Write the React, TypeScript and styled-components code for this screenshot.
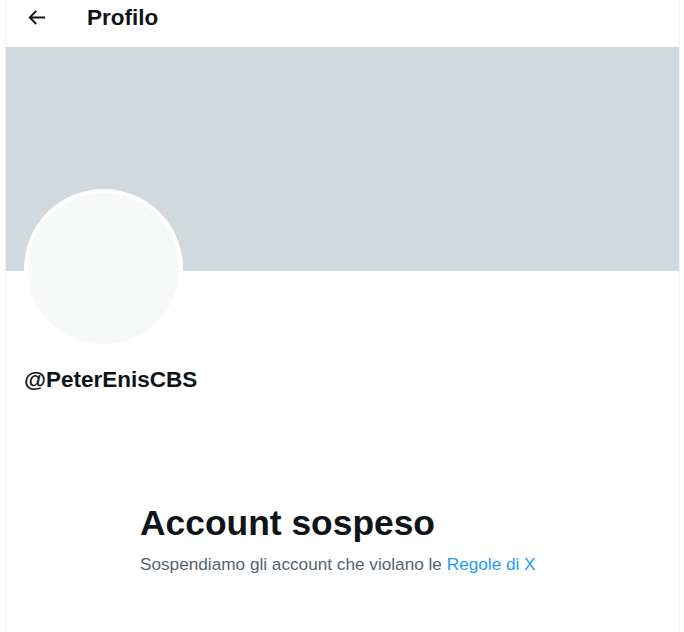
import React from "react";
import styled, { createGlobalStyle } from "styled-components";

const Global = createGlobalStyle`
  html, body { margin: 0; padding: 0; background: #ffffff; }
  body { font-family: "Liberation Sans", Arial, sans-serif; color: #0f1419; }
  * { box-sizing: border-box; }
`;

const Column = styled.main`
  margin-left: 5px;
  width: 675px;
  min-height: 100vh;
  border-left: 1px solid #eff3f4;
  border-right: 1px solid #eff3f4;
  display: flex;
  flex-direction: column;
`;

const Header = styled.header`
  height: 47px;
  padding: 0 0 13px 11px;
  display: flex;
  align-items: center;
  gap: 32px;
`;

const BackButton = styled.button`
  width: 38px;
  height: 38px;
  border: none;
  background: transparent;
  padding: 0;
  display: flex;
  align-items: center;
  justify-content: center;
  color: #0f1419;
  cursor: pointer;
  svg { width: 23px; height: 23px; fill: currentColor; }
`;

const Title = styled.h2`
  margin: 0;
  font-size: 22.5px;
  line-height: 27px;
  font-weight: 700;
  color: #0f1419;
`;

const Banner = styled.div`
  height: 224px;
  background: #cfd9de;
`;

const ProfileInfo = styled.section`
  padding: 0 18px;
  display: flex;
  flex-direction: column;
`;

const Avatar = styled.div`
  width: 159px;
  height: 159px;
  margin-top: -82px;
  border-radius: 50%;
  border: 4.5px solid #ffffff;
  background: #f7f9f9;
`;

const Handle = styled.div`
  margin-top: 18px;
  font-size: 22.5px;
  line-height: 27px;
  font-weight: 700;
  color: #0f1419;
`;

const EmptyState = styled.section`
  width: 405px;
  margin: 109px auto 0;
  display: flex;
  flex-direction: column;
  gap: 9px;
`;

const EmptyTitle = styled.h1`
  margin: 0;
  font-size: 35.4px;
  line-height: 42px;
  font-weight: 700;
  color: #0f1419;
`;

const EmptyText = styled.p`
  margin: 0;
  font-size: 17.2px;
  line-height: 22.5px;
  color: #536471;
  white-space: nowrap;
`;

const Link = styled.a`
  color: #1d9bf0;
  text-decoration: none;
`;

export default function App() {
  return (
    <>
      <Global />
      <Column>
        <Header>
          <BackButton aria-label="Indietro">
            <svg viewBox="0 0 24 24" aria-hidden="true">
              <path d="M7.414 13l5.043 5.04-1.414 1.42L3.586 12l7.457-7.46 1.414 1.42L7.414 11H21v2H7.414z" />
            </svg>
          </BackButton>
          <Title>Profilo</Title>
        </Header>
        <Banner />
        <ProfileInfo>
          <Avatar />
          <Handle>@PeterEnisCBS</Handle>
        </ProfileInfo>
        <EmptyState>
          <EmptyTitle>Account sospeso</EmptyTitle>
          <EmptyText>
            Sospendiamo gli account che violano le <Link href="#">Regole di X</Link>
          </EmptyText>
        </EmptyState>
      </Column>
    </>
  );
}
